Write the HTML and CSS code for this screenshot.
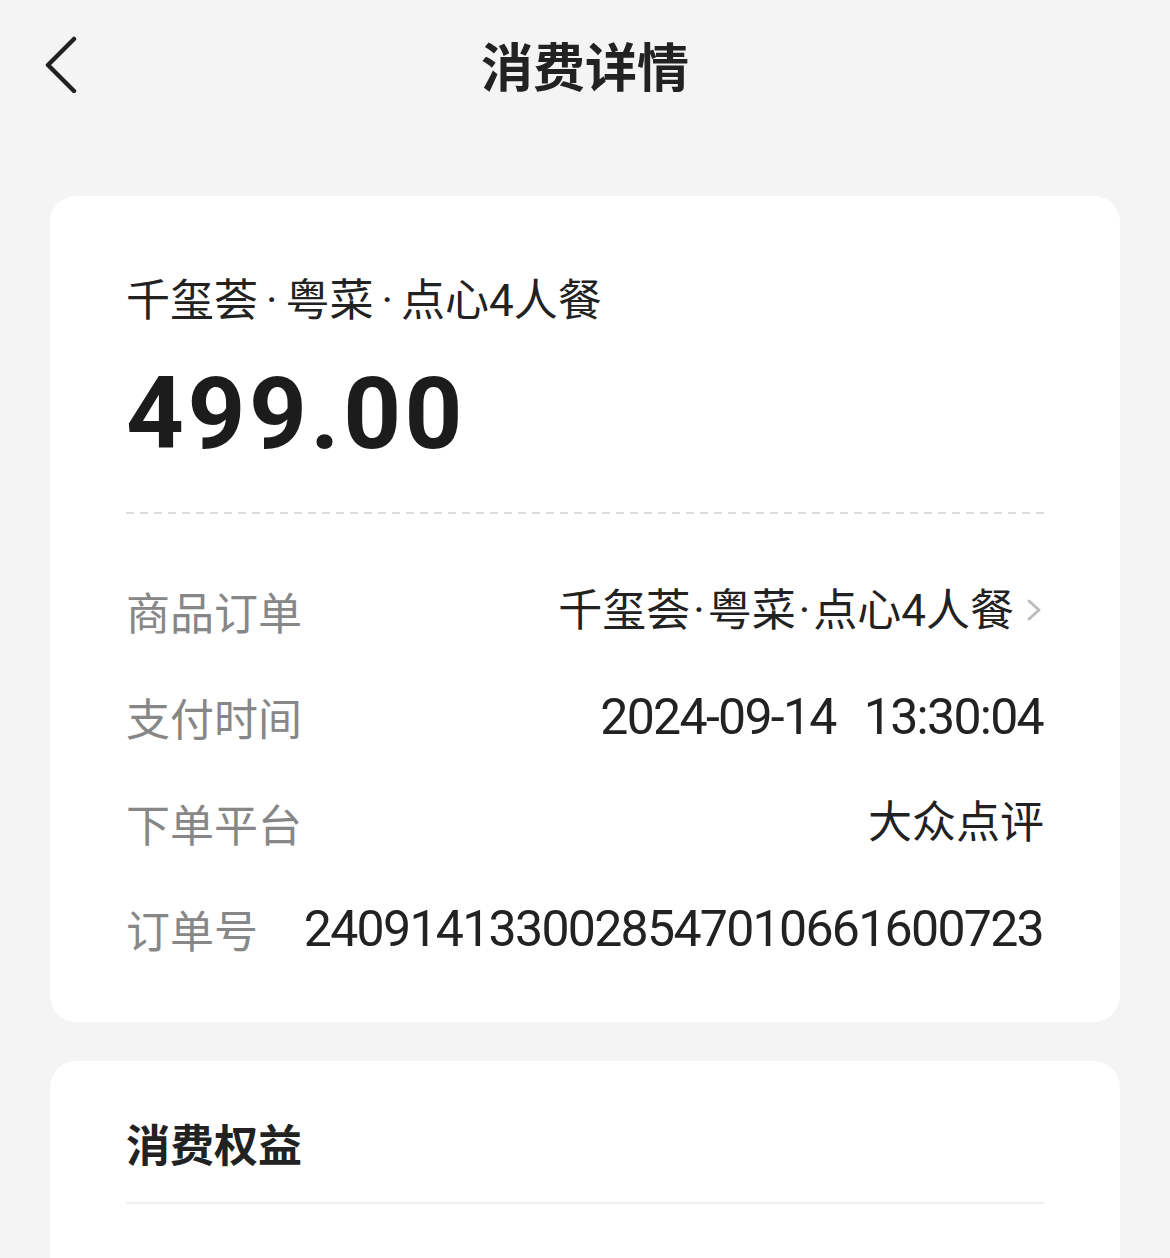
FILE: index.html
```html
<!DOCTYPE html>
<html lang="zh-CN">
<head>
<meta charset="utf-8">
<title>消费详情</title>
<link rel="stylesheet" href="styles.css">
</head>
<body>
<header class="nav">
  <button class="back" aria-label="返回">
    <svg width="40" height="60" viewBox="0 0 40 60"><polyline points="30,6 4,32 30,58" fill="none" stroke="#222" stroke-width="4.5" stroke-linecap="round" stroke-linejoin="round"/></svg>
  </button>
  <h1 class="nav-title">消费详情</h1>
</header>
<main class="content">
  <section class="card detail">
    <div class="product">千玺荟<span class="dot">·</span>粤菜<span class="dot">·</span>点心4人餐</div>
    <div class="price">499.00</div>
    <div class="dash"></div>
    <div class="row">
      <span class="label">商品订单</span>
      <span class="value link">千玺荟<span class="dot">·</span>粤菜<span class="dot">·</span>点心4人餐<svg class="chev" width="16" height="24" viewBox="0 0 16 24"><polyline points="3,3 13,12 3,21" fill="none" stroke="#bdbdbd" stroke-width="3" stroke-linecap="round" stroke-linejoin="round"/></svg></span>
    </div>
    <div class="row">
      <span class="label">支付时间</span>
      <span class="value num"><span>2024-09-14</span><span>13:30:04</span></span>
    </div>
    <div class="row">
      <span class="label">下单平台</span>
      <span class="value">大众点评</span>
    </div>
    <div class="row">
      <span class="label">订单号</span>
      <span class="value num">2409141330028547010661600723</span>
    </div>
  </section>
  <section class="card rights">
    <h2 class="section-title">消费权益</h2>
    <div class="divider"></div>
  </section>
</main>
</body>
</html>
```
FILE: styles.css
```css
html, body {
  margin: 0;
  padding: 0;
  background: #f4f4f4;
}
body {
  font-family: Roboto, "Noto Sans CJK SC", sans-serif;
  color: #222;
}
.nav {
  height: 130px;
  display: flex;
  align-items: center;
  justify-content: center;
  position: relative;
}
.back {
  position: absolute;
  left: 44px;
  top: 31px;
  padding: 0;
  border: 0;
  background: none;
  width: 40px;
  height: 64px;
  display: flex;
  align-items: center;
}
.nav-title {
  margin: 0;
  font-family: "Noto Sans CJK SC", sans-serif;
  font-size: 52px;
  font-weight: 700;
  color: #222;
  line-height: 60px;
}
.content {
  padding: 66px 50px 0;
  display: flex;
  flex-direction: column;
  gap: 39px;
}
.card {
  background: #fff;
  border-radius: 26px;
  padding: 0 76px;
}
.detail {
  padding-top: 75px;
  padding-bottom: 40px;
}
.product {
  font-size: 44px;
  line-height: 60px;
  color: #222;
}
.product .dot {
  padding: 0 8px;
}
.price {
  margin-top: 32px;
  font-family: Roboto, sans-serif;
  font-weight: 700;
  font-size: 101px;
  line-height: 1;
  letter-spacing: 3.5px;
  color: #1c1c1c;
  height: 102px;
}
.dash {
  margin-top: 47px;
  height: 1.5px;
  background: repeating-linear-gradient(to right, #dcdcdc 0 8px, transparent 8px 14px);
  margin-bottom: 44px;
}
.row {
  height: 106px;
  display: flex;
  align-items: center;
  justify-content: space-between;
}
.label {
  font-size: 44px;
  line-height: 60px;
  color: #878787;
  font-family: "Noto Sans CJK SC", sans-serif;
}
.value {
  font-size: 44px;
  line-height: 60px;
  color: #222;
  display: flex;
  align-items: center;
}
.value .dot {
  padding: 0 3px;
}
.value.link {
  margin-right: 2px;
}
.chev {
  margin-left: 12px;
  margin-top: -2px;
}
.value.num {
  font-size: 50px;
  letter-spacing: -1.7px;
  gap: 28px;
  margin-right: 1px;
}
.rights {
  padding-top: 52px;
  min-height: 260px;
}
.section-title {
  margin: 0;
  font-family: "Noto Sans CJK SC", sans-serif;
  font-size: 44px;
  font-weight: 700;
  line-height: 60px;
  color: #222;
}
.divider {
  margin-top: 29px;
  height: 2px;
  background: #f0f0f0;
}
```
